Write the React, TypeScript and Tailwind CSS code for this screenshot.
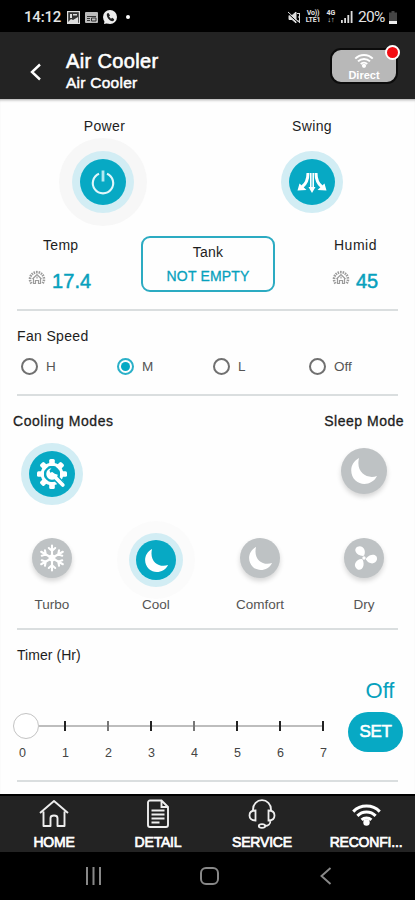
import React from 'react';

const stroke = '[-webkit-text-stroke:0.3px_currentColor]';

function Moon({ size }: { size: number }) {
  return (
    <svg width={size} height={size} viewBox="0 0 28 28" fill="#fff">
      <path d="M9 1C-.5 6-.8 17.500 5.500 23.500c6.500 6 17.500 3.800 21.500-4.500C17.500 22.500 5.500 16 9 1z" />
    </svg>
  );
}

function PowerIcon() {
  return (
    <svg width="26" height="28" viewBox="0 0 26 28" fill="none" stroke="#e0f7fb" strokeWidth="2.100">
      <path d="M9 5.800a10.200 10.200 0 1 0 8 0" />
      <path d="M13 2.500v11" strokeWidth="2.800" stroke="#b5e8f2" />
    </svg>
  );
}

function SwingIcon() {
  return (
    <svg width="30" height="22" viewBox="0 0 30 22" fill="none" stroke="#fff">
      <path d="M11 2C11 9 9 13 5 16M19 2c0 7 2 11 6 14" strokeWidth="3" />
      <path d="M13.800 2v15M16.200 2v15" strokeWidth="1.600" />
      <path d="M.500 19.500 2.500 12.500l7 6.500zM29.500 19.500 27.500 12.500l-7 6.500zM11.500 16h7L15 22z" fill="#fff" stroke="none" />
    </svg>
  );
}

function GearIcon() {
  return (
    <svg width="32" height="32" viewBox="0 0 32 32">
      <g fill="#fff">
        {[0, 45, 90, 135, 180, 225, 270, 315].map((a) => (
          <rect key={a} x="13.200" y="1" width="5.600" height="7" rx="1.500" transform={`rotate(${a} 16 16)`} />
        ))}
      </g>
      <circle cx="16" cy="16" r="9.800" fill="none" stroke="#fff" strokeWidth="3" />
      <path d="m18 18 9.500 10" stroke="#07a9c4" strokeWidth="6.600" />
      <path d="m16 16 10.800 11" stroke="#fff" strokeWidth="3.800" strokeLinecap="round" />
      <path d="M15.500 10.200a5.800 5.800 0 1 0 6.300 6.600l-4.600-1.600-2.900-.4-.8-2.300z" fill="#fff" />
    </svg>
  );
}

function Snowflake() {
  return (
    <svg width="28" height="28" viewBox="0 0 28 28" fill="none" stroke="#fff" strokeWidth="2.100" strokeLinecap="round">
      {[0, 60, 120, 180, 240, 300].map((a) => (
        <path key={a} d="M14 14V1.500M10.800 4l3.200 2.800L17.200 4" transform={`rotate(${a} 14 14)`} />
      ))}
      <circle cx="14" cy="14" r="3.400" fill="#fff" stroke="none" />
    </svg>
  );
}

function FanIcon() {
  return (
    <svg width="28" height="28" viewBox="0 0 28 28" fill="#fff">
      {[-28, 98, 215].map((a) => (
        <path key={a} d="M14 11.800C8 8 8.300 1 13.500 1s6.800 7 1.800 10.800z" transform={`rotate(${a} 14 14)`} />
      ))}
      <circle cx="14" cy="14" r="1.700" />
    </svg>
  );
}

function HouseSun() {
  return (
    <svg width="18" height="17" viewBox="0 0 18 17" fill="none" stroke="#9b9b9b" strokeWidth="1.200">
      <path d="M3.500 14.500a7 7 0 1 1 11 0" strokeWidth="2.600" strokeDasharray="1.500 0.900" />
      <path d="M4.500 10 9 5.500l4.500 4.500M5.500 9.500v5h2v-3h3v3h2v-5" />
      <path d="M9 7.500v2" />
    </svg>
  );
}

function Wifi({ w, h, color = '#fff' }: { w: number; h: number; color?: string }) {
  return (
    <svg width={w} height={h} viewBox="0 0 28 22" fill="none" stroke={color} strokeWidth="2.900">
      <path d="M1.200 8.200a18 18 0 0 1 25.600 0M5.200 12.300a12.400 12.400 0 0 1 17.600 0M9.300 16.200a6.700 6.700 0 0 1 9.400 0" />
      <circle cx="14" cy="18.800" r="3.100" fill={color} stroke="none" />
    </svg>
  );
}

function StatusBar() {
  return (
    <div className="flex h-8 shrink-0 items-center bg-black pt-0.5 pl-6 text-[#e4e4e4]">
      <span className="w-[43px] font-['Roboto'] text-[15px] leading-4 font-medium tracking-[-0.2px]">14:12</span>
      <svg width="13" height="13" viewBox="0 0 13 13">
        <rect x=".5" y=".5" width="12" height="12" fill="#333" stroke="#ddd" strokeWidth="1.400" />
        <path d="M3 3h2v4H3zM6 3h4v1.500H6zM1 11l3-3 2 1 5-3v6H1z" fill="#ddd" />
      </svg>
      <svg className="ml-[5px]" width="13" height="11" viewBox="0 0 13 11">
        <rect width="13" height="11" rx="1" fill="#bbb" />
        <path d="M2 4.500h9M2 6.500h3M2 8.500h3M6.500 6h4.500v3H6.500z" stroke="#333" fill="none" />
      </svg>
      <svg className="ml-[5px]" width="14" height="15" viewBox="0 0 14 15">
        <circle cx="7" cy="7" r="7" fill="#eee" />
        <path d="m1 14 1-5 4 4z" fill="#eee" />
        <path d="M4 3.500 5.500 3 7 5.500l-1 1L8 8.700l1.200-.9 2 1.500-.7 1.700C7 12 2.800 7 4 3.500z" fill="#222" />
      </svg>
      <span className="ml-[9px] size-1 rounded-full bg-white" />
      <svg className="ml-[158px]" width="13" height="13" viewBox="0 0 13 13" fill="#ddd" stroke="#ddd">
        <path d="M1 4.500h3L8 1v11L4 8.500H1z" />
        <path d="M9 2.500h3M10 6h2M9 10h3M11.500 2v9" fill="none" />
        <path d="m0 2.500 11 10" stroke="#000" />
        <path d="m0 1 12 11" />
      </svg>
      <span className="ml-1 w-4 text-center font-['Roboto'] text-[7px] leading-[7px] font-bold tracking-[-0.2px]">
        Vo)) LTE1
      </span>
      <span className="ml-1 w-3 text-center font-['Roboto'] text-[7px] leading-[7px] font-bold">
        4G ↓↑
      </span>
      <svg className="ml-1" width="12" height="12" viewBox="0 0 12 12" fill="#ddd">
        <path d="M0 9h1.800v3H0zM3.200 7H5v5H3.200zM6.400 4h1.800v8H6.400zM9.700 0h1.800v12H9.700z" />
      </svg>
      <span className="ml-[5px] w-[31px] font-['Roboto'] text-[15.500px] leading-4 tracking-[-0.7px]">20%</span>
      <svg width="8" height="13" viewBox="0 0 8 13">
        <path d="M2.500 0h3v1.500H8V13H0V1.500h2.500z" fill="#444" />
        <path d="M0 10h8v3H0z" fill="#eee" />
      </svg>
    </div>
  );
}

function Header() {
  return (
    <header className="flex h-[67px] shrink-0 bg-[#232323] text-white">
      <svg className="mt-[31px] ml-[29px]" width="13" height="18" viewBox="0 0 13 18" fill="none" stroke="#fff" strokeWidth="2.400">
        <path d="M11 1.500 3 9l8 7.500" />
      </svg>
      <div className="mt-[18px] ml-6 w-[200px]">
        <h1 className="text-[20px] leading-[23px] font-normal tracking-[0.35px] [-webkit-text-stroke:0.6px_currentColor]">Air Cooler</h1>
        <h2 className="mt-px text-[15.500px] leading-[18px] font-normal tracking-[0.25px] [-webkit-text-stroke:0.5px_currentColor]">Air Cooler</h2>
      </div>
      <div className="relative mt-4 ml-[64px] flex h-[36px] w-[68px] flex-col items-center rounded-[11px] border-2 border-[#0c0c0c] bg-[#b8b8b8] pt-[3px]">
        <Wifi w={20} h={16} />
        <span className="text-[11px] leading-[14px] font-bold text-white">Direct</span>
        <span className="absolute -top-[5px] -right-[4px] size-[15px] rounded-full border-2 border-white bg-[#f20d13]" />
      </div>
    </header>
  );
}

function ActiveButton({ halo, ring, disc, children }: { halo: string; ring: string; disc: string; children: React.ReactNode }) {
  return (
    <div className={`flex shrink-0 items-center justify-center rounded-full ${halo}`}>
      <div className={`flex items-center justify-center rounded-full bg-[#d2edf4] ${ring}`}>
        <div className={`flex items-center justify-center rounded-full bg-[#07a9c4] ${disc}`}>{children}</div>
      </div>
    </div>
  );
}

function IdleButton({ size, children }: { size: string; children: React.ReactNode }) {
  return (
    <div className={`flex shrink-0 items-center justify-center rounded-full bg-[#bec2c4] shadow-[0_3px_5px_rgba(0,0,0,0.16)] ${size}`}>
      {children}
    </div>
  );
}

function Divider() {
  return <div className="ml-[17px] h-[2px] w-[381px] shrink-0 bg-[#dadedf]" />;
}

const speeds = [
  { label: 'H', on: false },
  { label: 'M', on: true },
  { label: 'L', on: false },
  { label: 'Off', on: false },
];

const modes = [
  { label: 'Turbo', icon: <Snowflake /> },
  { label: 'Cool', icon: <Moon size={25} />, on: true },
  { label: 'Comfort', icon: <Moon size={25} /> },
  { label: 'Dry', icon: <FanIcon /> },
];

function Timer() {
  return (
    <section className="h-[150px] shrink-0">
      <div className="pt-[17px] pl-[17px] text-[14px] leading-4 tracking-[0.05px]">Timer (Hr)</div>
      <div className="flex">
        <div className="mt-[50px] w-[348px]">
          <div className="flex h-[26px] items-center pl-[13px]">
            <span className="size-[26px] shrink-0 rounded-full border-[1.500px] border-[#c3c3c3] bg-white" />
            <div className="flex h-[10px] w-[285px] items-center">
              <span className="h-[2px] w-[25px] bg-[#bdbdbd]" />
              {[1, 2, 3, 4, 5, 6, 7].map((n) => (
                <React.Fragment key={n}>
                  <span className={`h-[10px] w-[2px] shrink-0 ${n === 2 || n === 4 ? 'bg-[#777]' : 'bg-[#222]'}`} />
                  {n < 7 && <span className="h-[2px] flex-1 bg-[#bdbdbd]" />}
                </React.Fragment>
              ))}
            </div>
          </div>
          <div className="mt-[6px] flex pl-px text-[12.500px] leading-4 text-[#444]">
            {[0, 1, 2, 3, 4, 5, 6, 7].map((n) => (
              <span key={n} className="w-[43px] shrink-0 text-center">{n}</span>
            ))}
          </div>
        </div>
        <div className="mt-[15px] w-[55px] shrink-0">
          <div className="pl-[9px] text-center text-[22px] leading-[26px] text-[#07a1bd]">Off</div>
          <button className="mt-[8px] block h-[40px] w-[55px] rounded-[20px] bg-[#07a9c4] text-center text-[17px] tracking-[-0.3px] text-white [-webkit-text-stroke:0.6px_currentColor]">SET</button>
        </div>
      </div>
    </section>
  );
}

const tabs = [
  {
    label: 'HOME',
    icon: (
      <svg width="30" height="30" viewBox="0 0 30 30" fill="none" stroke="#eee" strokeWidth="1.900" strokeLinejoin="round">
        <path d="M1 14 15 2l14 12M4.500 12.500V27h7v-8c0-1.500 1-2.500 3.500-2.500s3.500 1 3.500 2.500v8h7V12.500" />
      </svg>
    ),
  },
  {
    label: 'DETAIL',
    icon: (
      <svg width="24" height="30" viewBox="0 0 24 30" fill="none" stroke="#eee" strokeWidth="1.900">
        <path d="M4 1.500h11.500L22 8v18a2 2 0 0 1-2 2H4a2 2 0 0 1-2-2v-22.500a2 2 0 0 1 2-2zM15.500 1.500V8H22M5.500 11.500h13M5.500 15.500h13M5.500 19.500h13M5.500 23.500h8" />
      </svg>
    ),
  },
  {
    label: 'SERVICE',
    icon: (
      <svg width="30" height="30" viewBox="0 0 28 30" fill="none" stroke="#eee" strokeWidth="1.800">
        <path d="M5 12V10.500C5 5 9 1.200 14 1.200s9 3.800 9 9.300V12M7.500 11.500v10c-4 0-6-2-6-5s2-5 6-5zM20.500 11.500v10c4 0 6-2 6-5s-2-5-6-5zM22.500 21.500c0 3.500-2.500 5.500-5.500 5.500" />
        <ellipse cx="14" cy="27" rx="3.200" ry="1.900" />
      </svg>
    ),
  },
  { label: 'RECONFI...', icon: <Wifi w={29} h={23} /> },
];

export default function App() {
  return (
    <div className="flex h-[900px] w-[415px] flex-col overflow-hidden bg-[#fefefe] font-['Liberation_Sans',Arial,sans-serif] text-[#1d1d1d]">
      <StatusBar />
      <Header />
      <main className="flex h-[695px] shrink-0 flex-col overflow-hidden shadow-[inset_0_3px_3px_-2px_rgba(0,0,0,0.35)]">
        <section className="flex h-[128px] shrink-0 pt-[19px] text-[14px] leading-4 tracking-[0.4px]">
          <div className="flex w-[205px] shrink-0 flex-col items-center">
            <span className="pl-1">Power</span>
            <div className="mt-1">
              <ActiveButton halo="size-[88px] bg-[#f7f7f7]" ring="size-[62px]" disc="size-[46px]"><PowerIcon /></ActiveButton>
            </div>
          </div>
          <div className="flex w-[214px] shrink-0 flex-col items-center">
            <span>Swing</span>
            <div className="mt-1">
              <ActiveButton halo="size-[88px]" ring="size-[62px]" disc="size-[46px]"><SwingIcon /></ActiveButton>
            </div>
          </div>
        </section>
        <section className="flex h-[82px] shrink-0 pt-[9px] text-[14px]">
          <div className="w-[141px]">
            <div className="pl-[43px] leading-[18px] tracking-[0.3px]">Temp</div>
            <div className="mt-[17px] flex pl-[28px]">
              <div className="-mt-0.5"><HouseSun /></div>
              <span className="ml-[6px] text-[20px] leading-5 tracking-[0.1px] text-[#07a1bd] [-webkit-text-stroke:0.5px_currentColor]">17.4</span>
            </div>
          </div>
          <div className="h-[56px] w-[134px] rounded-[9px] border-2 border-[#2cabc2] pt-[6px] text-center">
            <div className="leading-4 tracking-[0.2px]">Tank</div>
            <div className={`mt-2 leading-4 tracking-[0.15px] text-[#07a1bd] ${stroke}`}>NOT EMPTY</div>
          </div>
          <div className="w-[140px]">
            <div className="pl-[59px] leading-[18px] tracking-[0.5px]">Humid</div>
            <div className="mt-[17px] flex pl-[57px]">
              <div className="-mt-0.5"><HouseSun /></div>
              <span className="ml-[6px] text-[20px] leading-5 text-[#07a1bd] [-webkit-text-stroke:0.5px_currentColor]">45</span>
            </div>
          </div>
        </section>
        <Divider />
        <section className="h-[83px] shrink-0 pt-[17px]">
          <div className="pl-[17px] text-[14px] leading-4 tracking-[0.35px]">Fan Speed</div>
          <div className="mt-[14px] flex pl-[21px]">
            {speeds.map((s) => (
              <label key={s.label} className="flex h-[17px] w-[96px] items-center">
                <span className={`flex size-[17px] items-center justify-center rounded-full border-2 ${s.on ? 'border-[#2ab0c8]' : 'border-[#707070]'}`}>
                  {s.on && <span className="size-[9px] rounded-full bg-[#07a9c4]" />}
                </span>
                <span className="ml-2 text-[13.500px] leading-4 text-[#555]">{s.label}</span>
              </label>
            ))}
          </div>
        </section>
        <Divider />
        <section className={`mt-[17px] flex h-4 shrink-0 justify-between pr-[11px] pl-[13px] text-[14px] leading-4 ${stroke}`}>
          <span className="tracking-[0.55px]">Cooling Modes</span>
          <span className="tracking-[0.5px]">Sleep Mode</span>
        </section>
        <section className="flex h-[90px] shrink-0 justify-between pt-[14px] pr-7 pl-[21px]">
          <ActiveButton halo="size-[62px]" ring="size-[62px]" disc="size-[46px]"><GearIcon /></ActiveButton>
          <div className="mt-[5px]"><IdleButton size="size-[46px]"><Moon size={28} /></IdleButton></div>
        </section>
        <section className="flex h-[109px] shrink-0">
          {modes.map((m) => (
            <div key={m.label} className="flex w-[104px] shrink-0 flex-col items-center">
              <div className="flex h-[78px] items-center">
                {m.on ? (
                  <div className="mt-1"><ActiveButton halo="size-[78px] bg-[#fbfbfb]" ring="size-[54px]" disc="size-[40px]">{m.icon}</ActiveButton></div>
                ) : (
                  <IdleButton size="size-[40px]">{m.icon}</IdleButton>
                )}
              </div>
              <span className="text-[13.500px] leading-4 text-[#555]">{m.label}</span>
            </div>
          ))}
        </section>
        <Divider />
        <Timer />
        <Divider />
      </main>
      <nav className="flex h-[58px] shrink-0 border-t-2 border-black bg-[#232323] pl-[2px] text-white">
        {tabs.map((t) => (
          <div key={t.label} className="flex w-[104px] shrink-0 flex-col items-center">
            <div className="mt-[2px] flex h-[32px] items-center justify-center">{t.icon}</div>
            <span className="mt-[4px] text-[14px] leading-4 tracking-[-0.2px] [-webkit-text-stroke:0.7px_currentColor]">{t.label}</span>
          </div>
        ))}
      </nav>
      <div className="flex flex-1 items-center bg-black">
        <svg className="ml-[84px]" width="19" height="18" viewBox="0 0 19 18" stroke="#888" strokeWidth="2">
          <path d="M3 0v18M9.500 0v18M16 0v18" />
        </svg>
        <span className="ml-[97px] h-[18px] w-[19px] rounded-[6px] border-2 border-[#888]" />
        <svg className="ml-[101px]" width="12" height="18" viewBox="0 0 12 18" fill="none" stroke="#888" strokeWidth="1.900">
          <path d="M10.500 1 1.500 9l9 8" />
        </svg>
      </div>
    </div>
  );
}
